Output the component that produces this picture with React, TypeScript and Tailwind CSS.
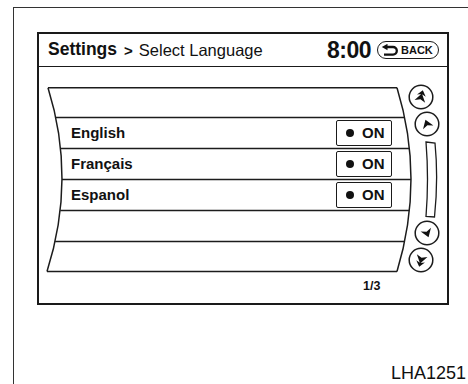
const font = "font-['Liberation_Sans',Arial,sans-serif]"

const rows = [
  { label: '', on: false, h: 'h-[30px]' },
  { label: 'English', on: true, h: 'h-[31px]' },
  { label: 'Français', on: true, h: 'h-[31px]' },
  { label: 'Espanol', on: true, h: 'h-[31px]' },
  { label: '', on: false, h: 'h-[31px]' },
  { label: '', on: false, h: 'h-[31px]' },
]

// curved edges of the list panel (quadratic curves)
const H = 184.5
const leftX = (y: number) => {
  const t = y / H
  return (1 - t) * (1 - t) * 1 + 2 * t * (1 - t) * 29.5
}
const rightX = (y: number) => {
  const t = y / H
  return 350 + 2 * t * (1 - t) * 28
}

function ListFrame() {
  const lines = [30.5, 61.5, 92.5, 123.5, 154.5]
  return (
    <svg className="absolute inset-0 overflow-visible pointer-events-none" width="362" height="186">
      <g stroke="#1c1c1c" strokeWidth="1.5" fill="none">
        <path d="M1 0.75 H350" />
        <path d="M0 184.5 H350" />
        <path d="M1 0.75 Q29.5 92 0 184.5" />
        <path d="M350 0.75 Q378 92 350 184.5" />
        {lines.map((y) => (
          <path key={y} d={`M${leftX(y).toFixed(1)} ${y} H${rightX(y).toFixed(1)}`} />
        ))}
      </g>
    </svg>
  )
}

function BackIcon() {
  return (
    <svg width="19" height="13" viewBox="0 0 19 13">
      <path d="M5.5 3 H12 A3.8 3.8 0 0 1 12 10.6 H3" stroke="#111" strokeWidth="2.3" fill="none" />
      <path d="M0.8 3 L6.5 -0.2 L6.5 6.2 Z" fill="#111" />
    </svg>
  )
}

function ScrollButton({ double, rot }: { double?: boolean; rot: number }) {
  return (
    <svg width="26" height="26" viewBox="0 0 26 26">
      <circle cx="13" cy="13" r="11.8" stroke="#1c1c1c" strokeWidth="1.5" fill="white" />
      <g fill="#111" transform={`rotate(${rot} 13 13)`}>
        {double ? (
          <path d="M13 6 L17.5 11.5 L13 10 L8.5 11.5 Z M13 9.5 L18.5 17.5 L13 15.2 L7.5 17.5 Z" />
        ) : (
          <path d="M13 8.5 L18.5 16.5 L13 14.2 L7.5 16.5 Z" />
        )}
      </g>
    </svg>
  )
}

function ScrollBar() {
  return (
    <svg width="14" height="78" viewBox="0 0 14 78">
      <path
        d="M1 1 L10 2 Q13.5 38 9.5 76 L1 75.5 Q4 38 1 1 Z"
        stroke="#1c1c1c"
        strokeWidth="1.3"
        fill="white"
      />
    </svg>
  )
}

export default function App() {
  return (
    <div className={`w-[468px] h-[384px] bg-white text-[#111] overflow-hidden flex flex-col ${font}`}>
      <div className="ml-[13px] mt-[7px] h-[377px] border-l border-t border-[#333] flex flex-col">
        {/* screen */}
        <div className="ml-[23px] mt-[24px] w-[412px] h-[273px] border-2 border-[#1a1a1a] flex flex-col">
          <div className="h-[33px] border-b-[1.5px] border-[#1a1a1a] flex items-center pl-[9px] pr-[8px]">
            <span className="text-[17.5px] font-bold leading-none">Settings</span>
            <span className="ml-[7px] text-[15px] font-bold leading-none">&gt;</span>
            <span className="ml-[6px] text-[16.5px] leading-none">Select Language</span>
            <span className="ml-auto text-[23px] font-bold leading-none tracking-[-0.5px]">8:00</span>
            <div className="ml-[6px] w-[62px] h-[18px] rounded-full border-[1.5px] border-[#1a1a1a] flex items-center pl-[3px] gap-[1px]">
              <BackIcon />
              <span className="text-[11px] font-bold leading-none">BACK</span>
            </div>
          </div>

          <div className="flex pl-[8px] pt-[20px]">
            <div className="relative w-[362px] flex flex-col">
              <ListFrame />
              {rows.map((r, i) => (
                <div key={i} className={`${r.h} flex items-center pl-[24px] pr-[17px] relative`}>
                  <span className="text-[15px] font-bold leading-none">{r.label}</span>
                  {r.on && (
                    <div className="ml-auto w-[56px] h-[26px] rounded-[2px] border-[1.5px] border-[#1a1a1a] bg-white flex items-center pl-[9px]">
                      <span className="w-[8px] h-[8px] rounded-full bg-[#111]" />
                      <span className="ml-[8px] text-[15px] font-bold leading-none">ON</span>
                    </div>
                  )}
                </div>
              ))}
            </div>
            <div className="flex flex-col -mt-[3px] -ml-[1px]">
              <div className="ml-[0px]"><ScrollButton double rot={15} /></div>
              <div className="ml-[6px] mt-[1px]"><ScrollButton rot={-20} /></div>
              <div className="ml-[17px] mt-[4px]"><ScrollBar /></div>
              <div className="ml-[6px] mt-[1px]"><ScrollButton rot={160} /></div>
              <div className="ml-[0px] mt-[1px]"><ScrollButton double rot={195} /></div>
            </div>
          </div>

          <div className="pl-[324px] mt-[7px] text-[12.5px] font-bold leading-none">1/3</div>
        </div>

        <div className="mt-auto mb-[2px] self-end pr-[2px] text-[18px] leading-none">LHA1251</div>
      </div>
    </div>
  )
}
